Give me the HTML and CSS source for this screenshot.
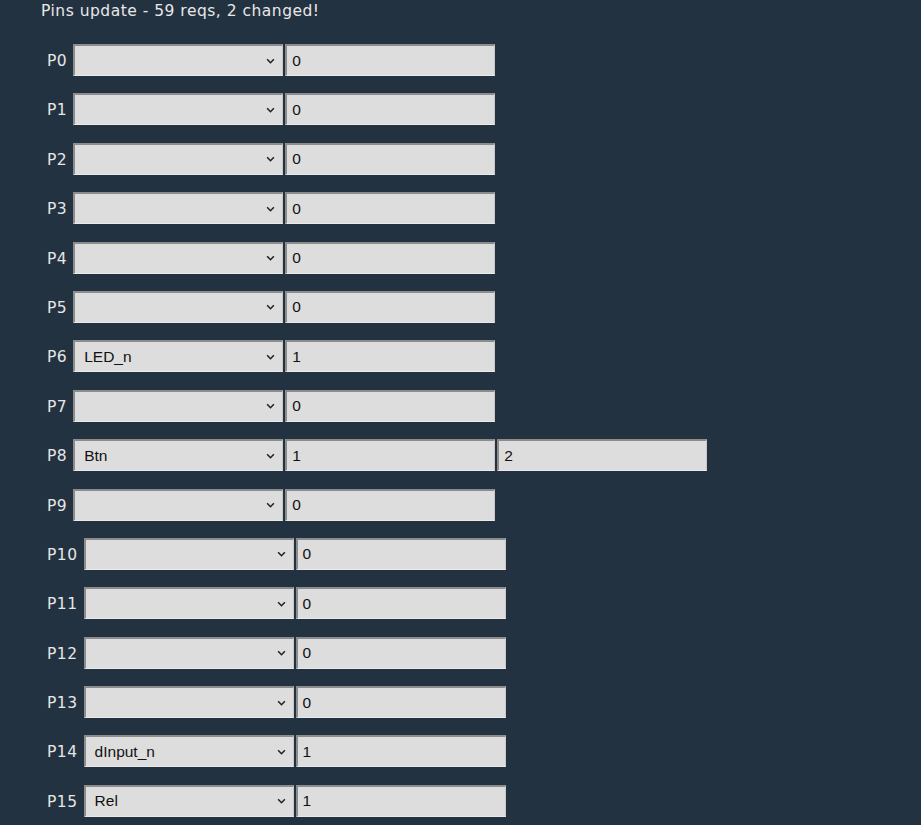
FILE: index.html
```html
<!DOCTYPE html>
<html>
<head>
<meta charset="utf-8">
<link rel="stylesheet" href="styles.css">
</head>
<body>
<div class="status">Pins update - 59 reqs, 2 changed!</div>
<div class="pins">
  <div class="row"><span class="lbl">P0</span><div class="sel"><span class="val"></span><svg class="chev" viewBox="0 0 8 5"><path d="M1 1l3 3 3-3"/></svg></div><div class="inp">0</div></div>
  <div class="row"><span class="lbl">P1</span><div class="sel"><span class="val"></span><svg class="chev" viewBox="0 0 8 5"><path d="M1 1l3 3 3-3"/></svg></div><div class="inp">0</div></div>
  <div class="row"><span class="lbl">P2</span><div class="sel"><span class="val"></span><svg class="chev" viewBox="0 0 8 5"><path d="M1 1l3 3 3-3"/></svg></div><div class="inp">0</div></div>
  <div class="row"><span class="lbl">P3</span><div class="sel"><span class="val"></span><svg class="chev" viewBox="0 0 8 5"><path d="M1 1l3 3 3-3"/></svg></div><div class="inp">0</div></div>
  <div class="row"><span class="lbl">P4</span><div class="sel"><span class="val"></span><svg class="chev" viewBox="0 0 8 5"><path d="M1 1l3 3 3-3"/></svg></div><div class="inp">0</div></div>
  <div class="row"><span class="lbl">P5</span><div class="sel"><span class="val"></span><svg class="chev" viewBox="0 0 8 5"><path d="M1 1l3 3 3-3"/></svg></div><div class="inp">0</div></div>
  <div class="row"><span class="lbl">P6</span><div class="sel"><span class="val">LED_n</span><svg class="chev" viewBox="0 0 8 5"><path d="M1 1l3 3 3-3"/></svg></div><div class="inp">1</div></div>
  <div class="row"><span class="lbl">P7</span><div class="sel"><span class="val"></span><svg class="chev" viewBox="0 0 8 5"><path d="M1 1l3 3 3-3"/></svg></div><div class="inp">0</div></div>
  <div class="row"><span class="lbl">P8</span><div class="sel"><span class="val">Btn</span><svg class="chev" viewBox="0 0 8 5"><path d="M1 1l3 3 3-3"/></svg></div><div class="inp">1</div><div class="inp">2</div></div>
  <div class="row"><span class="lbl">P9</span><div class="sel"><span class="val"></span><svg class="chev" viewBox="0 0 8 5"><path d="M1 1l3 3 3-3"/></svg></div><div class="inp">0</div></div>
  <div class="row"><span class="lbl">P10</span><div class="sel"><span class="val"></span><svg class="chev" viewBox="0 0 8 5"><path d="M1 1l3 3 3-3"/></svg></div><div class="inp">0</div></div>
  <div class="row"><span class="lbl">P11</span><div class="sel"><span class="val"></span><svg class="chev" viewBox="0 0 8 5"><path d="M1 1l3 3 3-3"/></svg></div><div class="inp">0</div></div>
  <div class="row"><span class="lbl">P12</span><div class="sel"><span class="val"></span><svg class="chev" viewBox="0 0 8 5"><path d="M1 1l3 3 3-3"/></svg></div><div class="inp">0</div></div>
  <div class="row"><span class="lbl">P13</span><div class="sel"><span class="val"></span><svg class="chev" viewBox="0 0 8 5"><path d="M1 1l3 3 3-3"/></svg></div><div class="inp">0</div></div>
  <div class="row"><span class="lbl">P14</span><div class="sel"><span class="val">dInput_n</span><svg class="chev" viewBox="0 0 8 5"><path d="M1 1l3 3 3-3"/></svg></div><div class="inp">1</div></div>
  <div class="row"><span class="lbl">P15</span><div class="sel"><span class="val">Rel</span><svg class="chev" viewBox="0 0 8 5"><path d="M1 1l3 3 3-3"/></svg></div><div class="inp">1</div></div>
</div>
</body>
</html>
```
FILE: styles.css
```css
html, body {
  margin: 0;
  padding: 0;
  background: #233240;
}
body {
  font-family: "DejaVu Sans", Verdana, sans-serif;
  color: #e6e6e6;
  font-size: 15.5px;
}
.status {
  padding: 1px 0 0 41px;
  height: 20px;
  line-height: 20px;
  font-size: 15.5px;
  letter-spacing: 0.5px;
  color: #e8e8e8;
}
.pins {
  display: flex;
  flex-direction: column;
  gap: 17.4px;
  padding: 23px 0 0 47px;
}
.row {
  display: flex;
  align-items: center;
  gap: 2px;
  height: 32px;
}
.lbl {
  margin-right: 4px;
  font-size: 15.5px;
  letter-spacing: 0.5px;
  padding-top: 2px;
  color: #e6e6e6;
}
.sel, .inp {
  box-sizing: border-box;
  width: 210px;
  height: 32px;
  background: #dddddd;
  border-style: solid;
  border-width: 2px 1px 1px 2px;
  border-color: #8c8c8c #c8c8c8 #eaeaea #8c8c8c;
  color: #111;
  font-family: "Liberation Sans", Arial, sans-serif;
  font-size: 15.5px;
  display: flex;
  align-items: center;
}
.sel {
  padding: 0 6px 0 9px;
  justify-content: space-between;
}
.inp {
  padding-left: 5px;
}
.chev {
  width: 9px;
  height: 6px;
  fill: none;
  stroke: #222;
  stroke-width: 1.4;
  margin-right: 1px;
}
```
